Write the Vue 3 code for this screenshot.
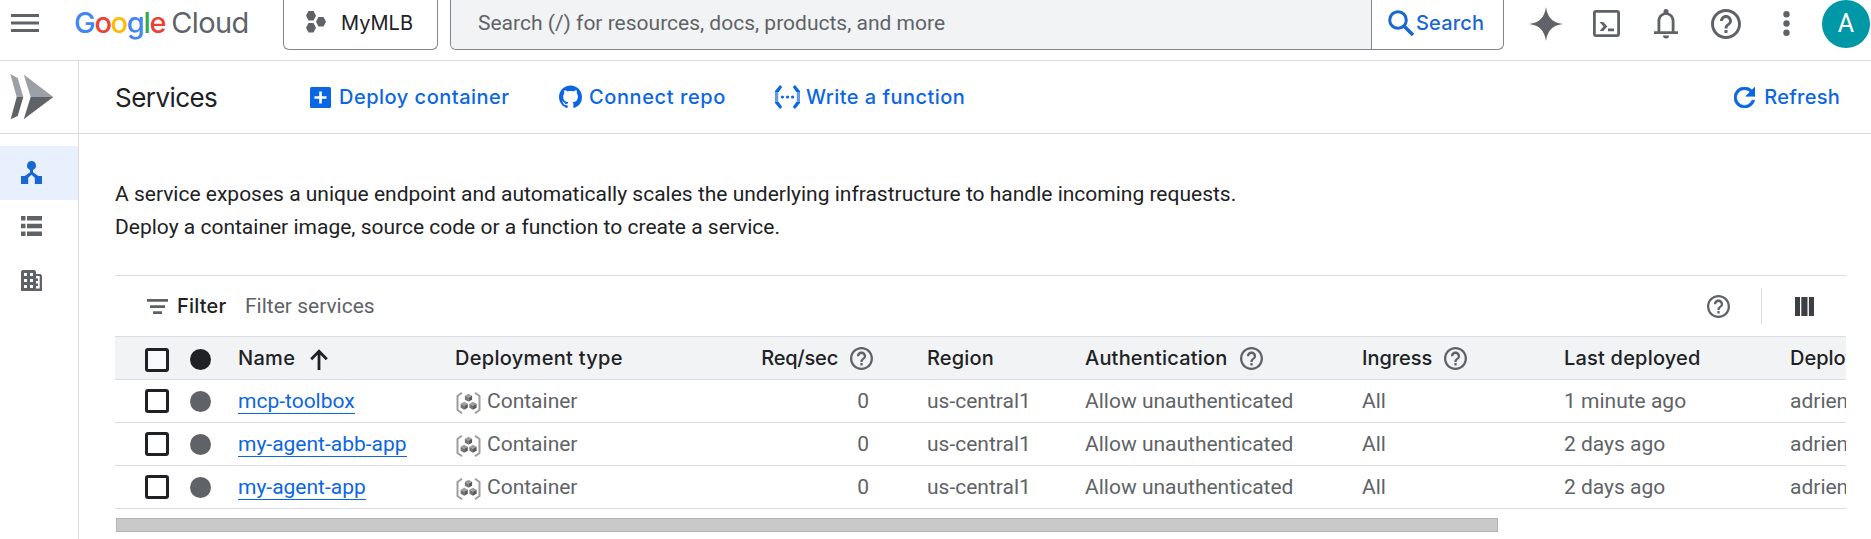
<script setup>
import { h } from 'vue'

const HelpIcon = () =>
  h('svg', { viewBox: '2 2 20 20', fill: '#5f6368' }, [
    h('path', {
      d: 'M11 18h2v-2h-2v2zm1-16C6.48 2 2 6.48 2 12s4.48 10 10 10 10-4.48 10-10S17.52 2 12 2zm0 18c-4.41 0-8-3.59-8-8s3.59-8 8-8 8 3.59 8 8-3.59 8-8 8zm0-14c-2.21 0-4 1.79-4 4h2c0-1.1.9-2 2-2s2 .9 2 2c0 2-3 1.75-3 5h2c0-2.25 3-2.5 3-5 0-2.21-1.79-4-4-4z',
    }),
  ])

const services = [
  { name: 'mcp-toolbox', deployed: '1 minute ago' },
  { name: 'my-agent-abb-app', deployed: '2 days ago' },
  { name: 'my-agent-app', deployed: '2 days ago' },
]
</script>

<template>
  <div class="page">
    <header class="topbar">
      <svg class="menu" viewBox="0 0 28 18" fill="#5f6368"><path d="M0 0h28v3H0zM0 7.5h28v3H0zM0 15h28v3H0z" /></svg>
      <div class="logo"><span class="google"><span class="b">G</span><span class="r">o</span><span class="y">o</span><span class="b">g</span><span class="g">l</span><span class="r">e</span></span><span class="cloud">Cloud</span></div>
      <div class="project">
        <svg viewBox="0 0 20 22" fill="#5f6368"><path d="M2.5 0h5L10 4.7 7.5 9.4h-5L0 4.7zM2.5 12h5l2.5 4.7-2.5 4.7h-5L0 16.7zM12.5 6h5L20 10.7l-2.5 4.7h-5L10 10.7z" /></svg>
        <span class="mymlb">MyMLB</span>
      </div>
      <div class="search">
        <div class="field"><span>Search (/) for resources, docs, products, and more</span></div>
        <div class="go">
          <svg viewBox="0 0 26 26" fill="none" stroke="#1967d2" stroke-width="3"><circle cx="10" cy="10" r="8.3" /><path d="M16 16l9 9" stroke-width="3.6" /></svg>
          <span>Search</span>
        </div>
      </div>
      <div class="tools">
        <svg class="spark" viewBox="0 0 34 34" fill="#5f6368"><path d="M17 0C18.6 10.5 23 15.4 34 17C23 18.6 18.6 23.5 17 34C15.4 23.5 11 18.6 0 17C11 15.4 15.4 10.5 17 0z" /></svg>
        <svg class="term" viewBox="0 0 27 27"><rect x="1.4" y="1.4" width="24.2" height="24.2" rx="1.6" fill="none" stroke="#5f6368" stroke-width="2.8" /><path d="M6.5 12h3.8l4 4.5-4 4.5H6.5l4-4.5zM15 18.6h6v2.6h-6z" fill="#5f6368" /></svg>
        <svg class="bell" viewBox="0 0 24 30" fill="#5f6368"><path d="M12 0a2.6 2.6 0 0 1 2.5 2.7v1c3.6 1.1 6 4.3 6 8.3v10.3H24V25H0v-2.700h3.500V12c0-4 2.400-7.200 6-8.300v-1A2.600 2.600 0 0 1 12 0zM12 6c-3.300 0-5.700 2.600-5.700 6v10.300h11.400V12c0-3.400-2.400-6-5.700-6zM9 26.500h6a3 3 0 0 1-6 0z" /></svg>
        <HelpIcon class="help-lg" />
        <svg class="dots" viewBox="0 0 7 25" fill="#5f6368"><circle cx="3.500" cy="3.300" r="3.200" /><circle cx="3.500" cy="12.500" r="3.200" /><circle cx="3.500" cy="21.700" r="3.200" /></svg>
        <div class="avatar">A</div>
      </div>
    </header>

    <div class="body">
      <nav class="rail">
        <div class="product">
          <svg viewBox="0 0 44 46"><path d="M.3 0l7.400 4 5.600 19H6.700z" fill="#9aa0a6" /><path d="M6.700 23h6.600L7.700 42 .7 45.300z" fill="#5f6368" /><path d="M13.700 .5L43.300 23H20.700z" fill="#9aa0a6" /><path d="M20.700 23h22.600L13.700 45.300z" fill="#5f6368" /></svg>
        </div>
        <div class="item active">
          <svg viewBox="0 0 21 23" fill="#1967d2"><path d="M10.500 0a4.600 4.600 0 0 1 1.500 8.900v2.300l5.300 3.800H21v8h-7.200v-6.200L10.500 13.700 7.200 16.800V23H0v-8h3.700L9 11.200V8.900A4.600 4.600 0 0 1 10.500 0z" /></svg>
        </div>
        <div class="item">
          <svg class="list" viewBox="0 0 21 20" fill="#5f6368"><path d="M0 0h4.500v4.500H0zM6 0h15v4.500H6zM0 7.700h4.500v4.500H0zM6 7.700h15v4.500H6zM0 15.400h4.500v4.500H0zM6 15.400h15v4.500H6z" /></svg>
        </div>
        <div class="item">
          <svg class="bldg" viewBox="0 0 21 21" fill="#5f6368" fill-rule="evenodd"><path d="M1.500 0h12L15 1.500V4h4.500L21 5.500V21H0V1.500zM3 3v3h3V3zM9 3v3h3V3zM3 9v3h3V9zM9 9v3h3V9zM3 15v3h3v-3zM9 15v3h3v-3zM15 6v2.500h2V11h-2v2.500h2V16h-2v2.500h3.700V6z" /></svg>
        </div>
      </nav>

      <main class="main">
        <div class="actions">
          <h1>Services</h1>
          <a class="act deploy"><svg viewBox="0 0 21 21"><rect width="21" height="21" rx="1.500" fill="#0b66e4" /><path d="M9.200 4.500h2.600v4.700h4.700v2.600h-4.700v4.700H9.200v-4.700H4.500V9.200h4.700z" fill="#fff" /></svg><span>Deploy container</span></a>
          <a class="act connect"><svg viewBox="0 0 16 16" fill="#0b66e4"><path d="M8 0C3.580 0 0 3.580 0 8c0 3.540 2.290 6.530 5.470 7.590.4.070.55-.17.55-.38 0-.19-.01-.82-.01-1.490-2.010.37-2.530-.49-2.690-.94-.09-.23-.48-.94-.82-1.130-.28-.15-.68-.52-.01-.53.63-.01 1.080.58 1.230.82.72 1.210 1.870.87 2.330.66.07-.52.28-.87.51-1.070-1.780-.2-3.640-.89-3.640-3.950 0-.87.31-1.590.82-2.150-.08-.2-.36-1.020.08-2.120 0 0 .67-.21 2.200.82.64-.18 1.320-.27 2-.27s1.360.09 2 .27c1.530-1.040 2.200-.82 2.200-.82.44 1.100.16 1.920.08 2.120.51.56.82 1.270.82 2.150 0 3.070-1.870 3.750-3.650 3.950.29.25.54.73.54 1.480 0 1.070-.01 1.930-.01 2.200 0 .21.15.46.55.38A8.010 8.010 0 0 0 16 8c0-4.420-3.580-8-8-8z" /></svg><span>Connect repo</span></a>
          <a class="act write"><svg viewBox="0 0 25 24" fill="#0b66e4"><path d="M0 6h3.200v12H0zM21.800 6H25v12h-3.200z" opacity=".65" /><path d="M5 0l2.200 2-3.500 5H0V6zM20 0l-2.200 2 3.500 5H25V6zM5 24l2.200-2-3.500-5H0v1zM20 24l-2.200-2 3.500-5H25v1z" /><circle cx="7.400" cy="12" r="1.600" /><circle cx="12.500" cy="12" r="1.600" /><circle cx="17.600" cy="12" r="1.600" /></svg><span>Write a function</span></a>
          <a class="act refresh"><svg viewBox="4 4 16 16" fill="#0b66e4"><path d="M17.650 6.350C16.200 4.900 14.210 4 12 4c-4.420 0-7.990 3.580-7.990 8s3.570 8 7.990 8c3.730 0 6.840-2.550 7.730-6h-2.080c-.82 2.330-3.040 4-5.650 4-3.310 0-6-2.690-6-6s2.690-6 6-6c1.660 0 3.140.69 4.220 1.780L13 11h7V4l-2.350 2.350z" stroke="#0b66e4" stroke-width=".5" /></svg><span>Refresh</span></a>
        </div>

        <p class="intro">A service exposes a unique endpoint and automatically scales the underlying infrastructure to handle incoming requests.<br />Deploy a container image, source code or a function to create a service.</p>

        <section class="panel">
          <div class="filter">
            <svg class="ficon" viewBox="0 0 21 15" fill="#5f6368"><path d="M0 0h21v2.700H0zM3 6.200h15v2.700H3zM6 12.300h9V15H6z" /></svg>
            <span class="flabel">Filter</span>
            <span class="fhint">Filter services</span>
            <HelpIcon class="help fhelp" />
            <i class="sep"></i>
            <svg class="cols" viewBox="0 0 19 19" fill="#3c4043"><path d="M0 0h5v19H0zM6.300 0h6.200v19H6.300zM13.900 0H19v19h-5.100z" /></svg>
          </div>

          <div class="row head">
            <i class="check"></i>
            <i class="dot"></i>
            <div class="cell"><span class="t-name">Name</span><svg class="arrow" viewBox="0 0 18 21" fill="none" stroke="#202124" stroke-width="2.800"><path d="M9 21V2.500M1.200 10.200L9 2.300l7.800 7.900" /></svg></div>
            <div class="cell"><span class="t-type">Deployment type</span></div>
            <div class="cell end"><span class="t-req">Req/sec</span><HelpIcon class="help" /></div>
            <div class="cell"><span class="t-region">Region</span></div>
            <div class="cell"><span class="t-auth">Authentication</span><HelpIcon class="help" /></div>
            <div class="cell"><span class="t-ing">Ingress</span><HelpIcon class="help" /></div>
            <div class="cell"><span class="t-last">Last deployed</span></div>
            <div class="cell"><span class="t-by">Deployed by</span></div>
          </div>

          <div v-for="s in services" :key="s.name" class="row">
            <i class="check"></i>
            <i class="dot"></i>
            <div class="cell"><a class="link">{{ s.name }}</a></div>
            <div class="cell">
              <svg class="cont" viewBox="0 0 25 22">
                <path d="M6 .8L1.500 4v14L6 21.200M19 .8L23.500 4v14L19 21.200" fill="none" stroke="#9e9e9e" stroke-width="2" />
                <g v-for="p in [[12.500, 5.800], [8.200, 13.800], [17, 13.800]]" :key="p[0]" :transform="`translate(${p[0]} ${p[1]})`">
                  <path d="M0-4L3.600-2 0 0-3.600-2z" fill="#9e9e9e" />
                  <path d="M-3.600-2L0 0v4L-3.600 2z" fill="#757575" />
                  <path d="M3.600-2L0 0v4L3.600 2z" fill="#5a5a5a" />
                </g>
              </svg>
              <span>Container</span>
            </div>
            <div class="cell end zero"><span>0</span></div>
            <div class="cell"><span>us-central1</span></div>
            <div class="cell"><span>Allow unauthenticated</span></div>
            <div class="cell"><span>All</span></div>
            <div class="cell"><span>{{ s.deployed }}</span></div>
            <div class="cell"><span>adrien</span></div>
          </div>
        </section>
        <div class="scroll"></div>
      </main>
    </div>
  </div>
</template>

<style>
body { background: #fff; overflow: hidden; }
</style>

<style scoped>
* { box-sizing: border-box; }
.page { width: 1871px; height: 539px; overflow: hidden; background: #fff; font-family: Roboto, sans-serif; font-size: 21px; color: #202124; display: flex; flex-direction: column; }
svg { display: block; flex: none; }
span { white-space: nowrap; }
.topbar { height: 61px; flex: none; border-bottom: 1px solid #dadce0; display: flex; align-items: flex-start; padding-left: 11px; }
.menu { width: 28px; height: 18px; margin-top: 14px; }
.logo { margin-left: 35px; width: 209px; height: 46px; line-height: 44px; font-family: Inter, sans-serif; font-size: 29px; color: #5f6368; display: flex; align-items: center; gap: 6px; }
.google { font-weight: 500; letter-spacing: -1.300px; }
.cloud { letter-spacing: -0.600px; }
.b { color: #4285f4; } .r { color: #ea4335; } .y { color: #fbbc04; } .g { color: #34a853; }
.project { width: 155px; height: 50px; border: 1px solid #80868b; border-top: 0; border-radius: 0 0 6px 6px; display: flex; align-items: center; padding: 0 0 4px 22px; font-family: Inter, sans-serif; font-size: 20px; }
.project svg { width: 20px; height: 22px; margin-right: 15px; margin-top: -2px; }
.search { width: 1054px; height: 50px; margin-left: 12px; border: 1px solid #80868b; border-top: 0; border-radius: 0 0 6px 6px; display: flex; overflow: hidden; }
.field { width: 921px; background: #f1f3f4; border-right: 1px solid #80868b; display: flex; align-items: center; padding: 0 0 4px 27px; color: #5f6368; }
.go { display: flex; align-items: center; padding: 0 0 4px 16px; color: #1967d2; font-family: Inter, sans-serif; font-weight: 500; font-size: 20px; letter-spacing: 0.200px; }
.go svg { width: 26px; height: 26px; margin-right: 2px; }
.tools { flex: 1; height: 47px; display: flex; align-items: center; }
.spark { width: 34px; height: 34px; margin-left: 25px; }
.term { width: 27px; height: 27px; margin-left: 30px; }
.bell { width: 24px; height: 30px; margin-left: 34px; }
.help-lg { width: 30px; height: 30px; margin-left: 33px; }
.dots { width: 7px; height: 25px; margin-left: 42px; }
.avatar { width: 48px; height: 48px; border-radius: 50%; background: #0097a7; color: #fff; margin-left: 32px; flex: none; display: flex; align-items: center; justify-content: center; font-size: 25px; }

.body { flex: 1; display: flex; min-height: 0; }
.rail { width: 79px; flex: none; border-right: 1px solid #dadce0; }
.product { height: 73px; border-bottom: 1px solid #dadce0; padding: 13px 0 0 10px; margin-bottom: 12px; }
.product svg { width: 44px; height: 46px; }
.item { height: 54px; display: flex; align-items: center; padding: 0 0 2px 21px; }
.active { background: #e8f0fe; }
.item svg { width: 21px; height: 23px; }
.item .list { height: 20px; }
.item .bldg { height: 21px; }

.main { flex: 1; min-width: 0; }
.actions { height: 73px; border-bottom: 1px solid #dadce0; display: flex; align-items: center; padding: 0 31px 0 36px; font-family: Inter, sans-serif; }
h1 { margin: 0; width: 195px; font-size: 26px; font-weight: 400; letter-spacing: -0.550px; }
.act { display: flex; align-items: center; gap: 8px; color: #0b66e4; font-weight: 500; font-size: 20px; }
.act svg { width: 21px; height: 21px; }
.deploy { width: 249px; letter-spacing: 0.500px; }
.connect { width: 216px; gap: 7px; letter-spacing: 0.600px; }
.connect svg { width: 23px; height: 24px; }
.write { gap: 6px; letter-spacing: 0.450px; }
.write svg { width: 25px; height: 24px; }
.refresh { margin-left: auto; gap: 9px; letter-spacing: 0.250px; }
.intro { margin: 44px 0 0 36px; line-height: 33px; white-space: nowrap; }

.panel { margin: 31px 0 0 36px; width: 1731px; border-top: 1px solid #dadce0; overflow: hidden; }
.filter { height: 60px; display: flex; align-items: center; padding-left: 32px; }
.ficon { width: 21px; height: 15px; margin-right: 9px; }
.flabel { font-family: Inter, sans-serif; font-weight: 500; font-size: 20px; width: 68px; letter-spacing: 0.200px; }
.fhint { color: #5f6368; }
.help { width: 23px; height: 23px; }
.fhelp { margin-left: auto; }
.sep { width: 1px; height: 36px; background: #dadce0; margin: 0 33px 0 31px; }
.cols { width: 19px; height: 19px; margin-right: 32px; }
.row { display: grid; width: 2000px; grid-template-columns: 75px 48px 217px 306px 166px 158px 277px 202px 226px 210px; height: 43px; border-bottom: 1px solid #dadce0; align-items: center; color: #5f6368; }
.head { height: 44px; border-top: 1px solid #dadce0; background: #f1f3f4; color: #202124; font-family: Inter, sans-serif; font-weight: 500; font-size: 20px; }
.check { width: 24px; height: 24px; margin-left: 30px; border: 3px solid #202124; border-radius: 3px; background: #fff; }
.head .check { margin-top: 4px; background: #f8f9fa; }
.dot { width: 21px; height: 21px; border-radius: 50%; background: #5f6368; }
.head .dot { background: #202124; margin-top: 3px; }
.cell { display: flex; align-items: center; }
.cell .help { margin-left: 12px; }
.arrow { width: 18px; height: 21px; margin-left: 15px; margin-top: 2px; }
.t-name { letter-spacing: 0.300px; }
.t-type { letter-spacing: 0.300px; }
.t-req { letter-spacing: -0.200px; }
.t-region { letter-spacing: 0.150px; }
.t-auth { letter-spacing: 0.200px; }
.t-ing { letter-spacing: -0.050px; }
.t-last { letter-spacing: 0.200px; }
.end { justify-content: flex-end; padding-right: 54px; }
.zero { padding-right: 58px; }
.link { color: #0b66e4; line-height: 24px; padding-top: 1px; border-bottom: 1px solid #0b66e4; }
.cont { width: 25px; height: 22px; margin: 3px 6px 0 1px; }
.scroll { width: 1382px; height: 14px; margin: 9px 0 0 37px; background: #c9c9c9; border: 1px solid #b3b3b3; }
</style>
